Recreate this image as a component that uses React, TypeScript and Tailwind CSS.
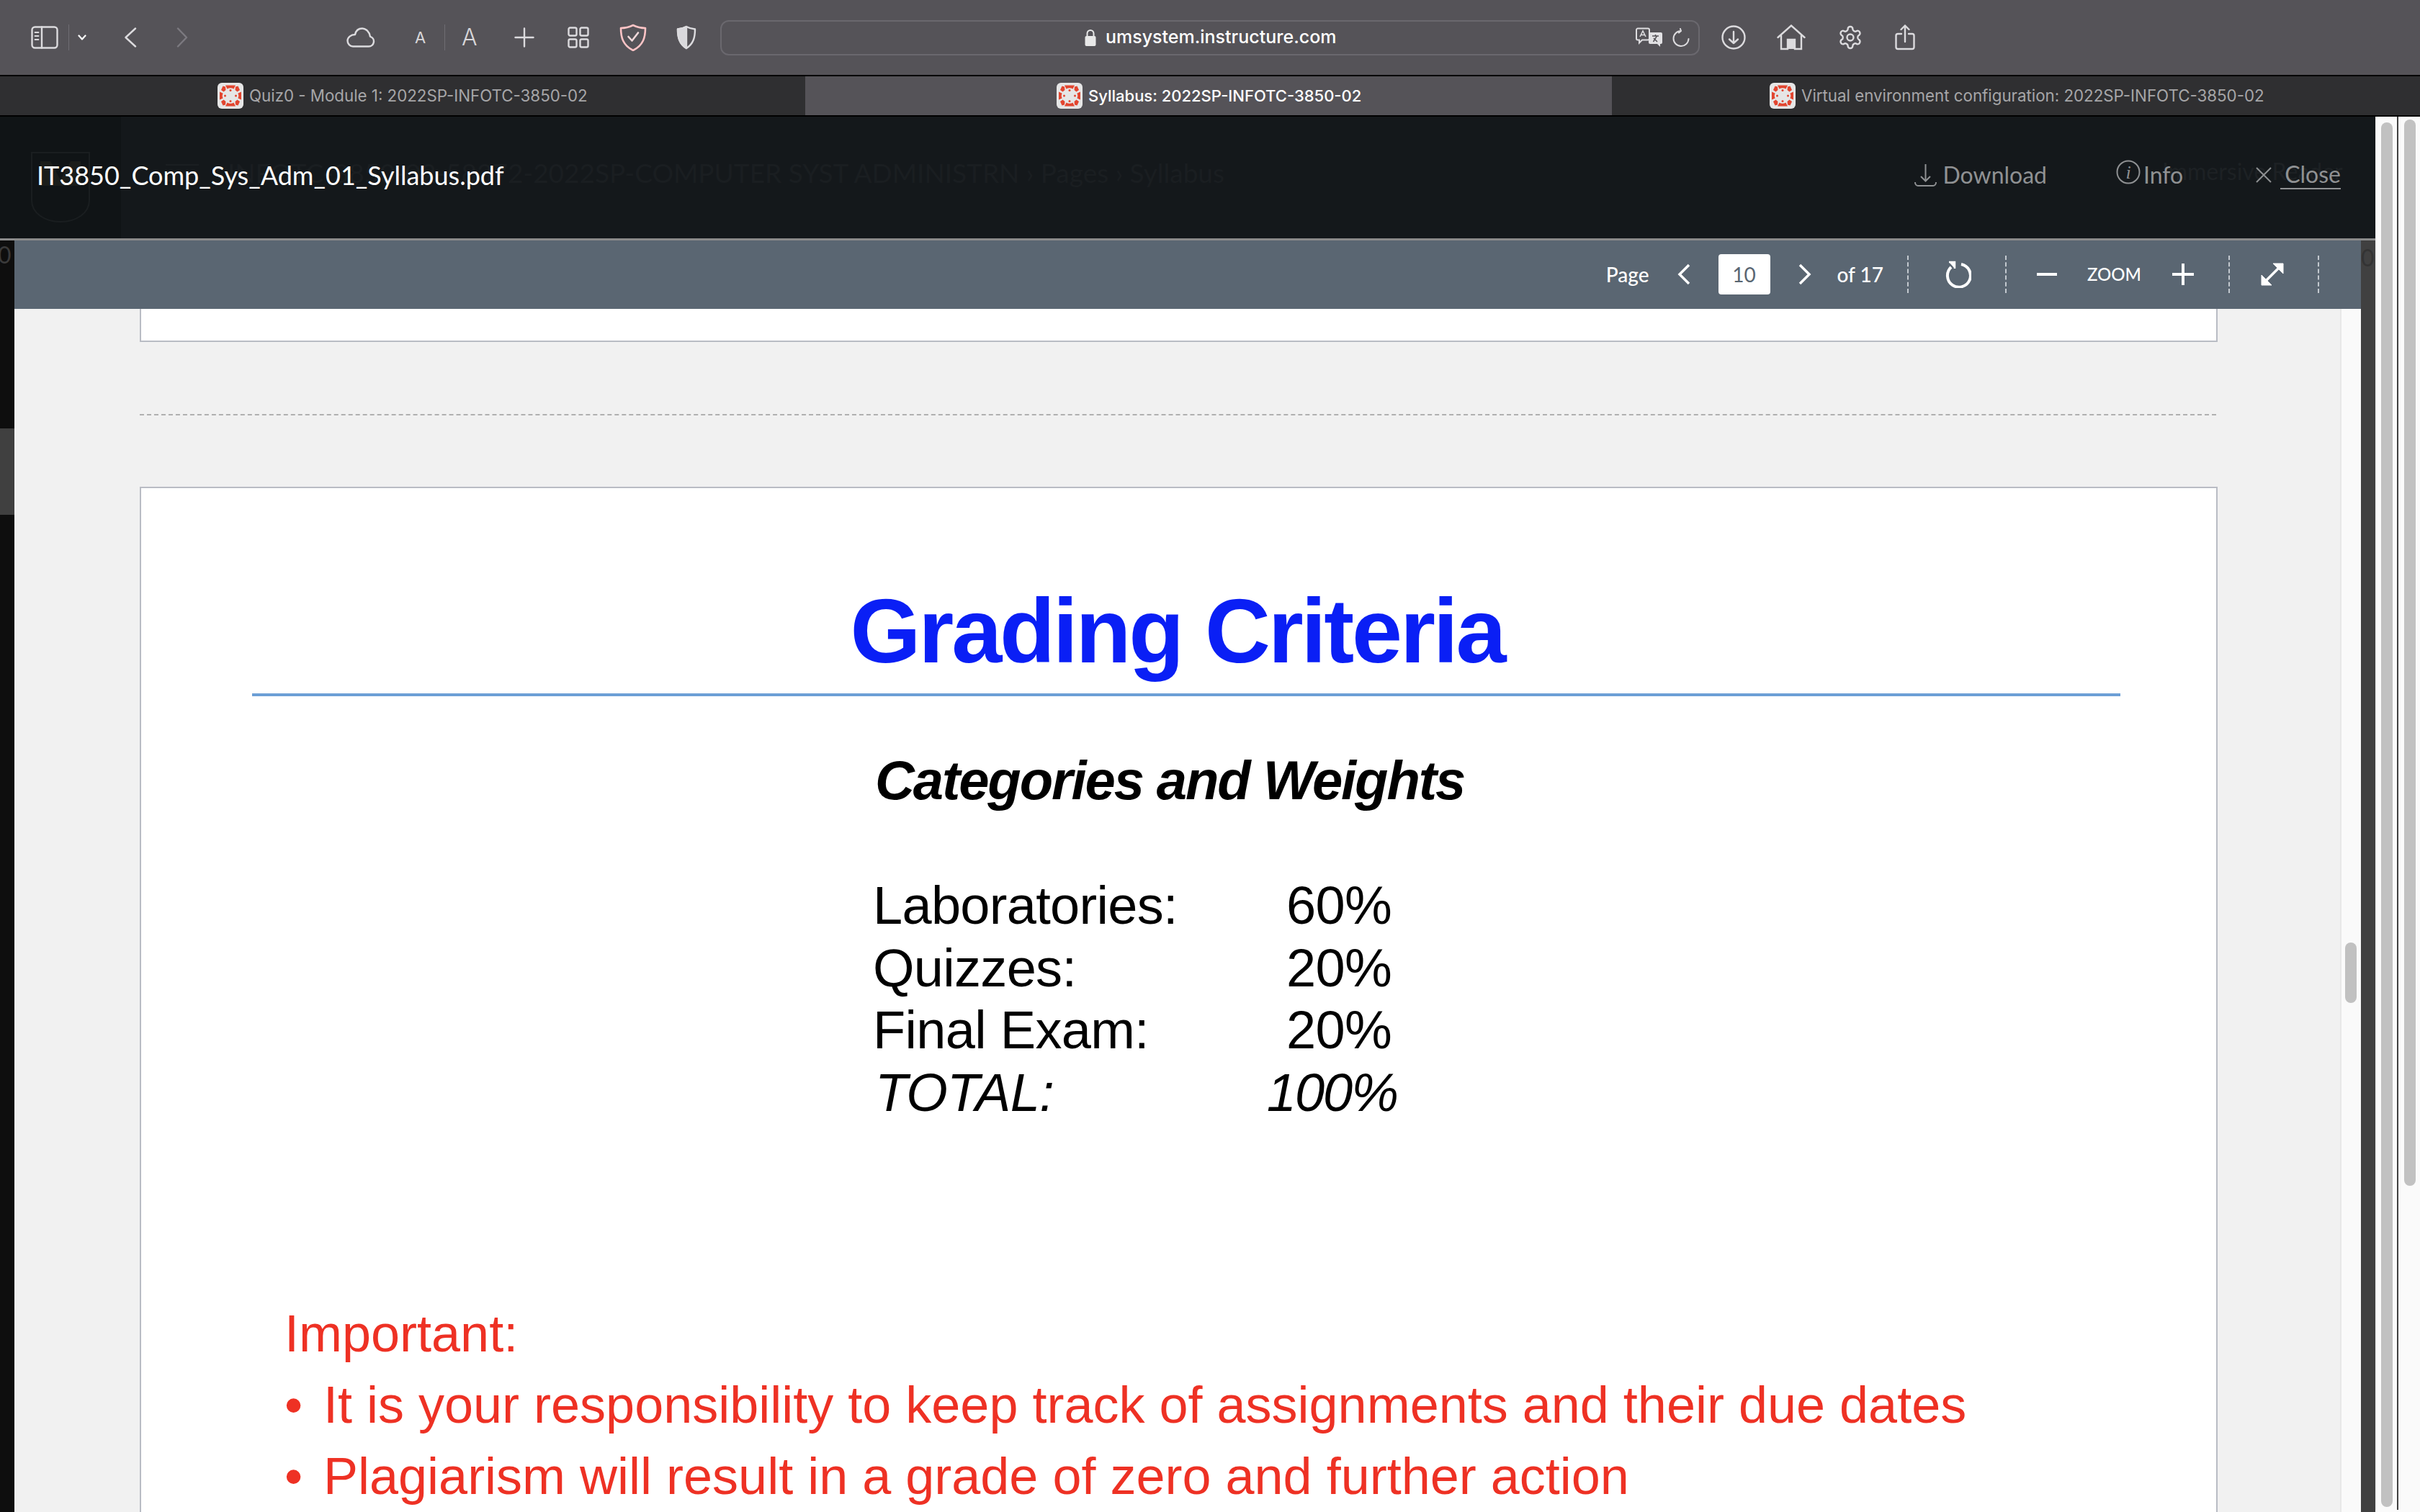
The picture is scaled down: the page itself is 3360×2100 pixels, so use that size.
import type { ReactNode } from "react";

const chrome = "font-['Inter','Liberation_Sans',sans-serif]";
const lato = "font-['Lato','Liberation_Sans',sans-serif]";
const helv = "font-['Liberation_Sans',Arial,sans-serif]";

// draws a small stroked icon, most of the toolbar uses the same settings
const Ico = ({ w, h, vb, ml, children, color = "#dcdbde", sw = 2.4 }: { w: number; h: number; vb: string; ml: string; children: ReactNode; color?: string; sw?: number }) => (
  <svg width={w} height={h} viewBox={vb} fill="none" stroke={color} strokeWidth={sw} strokeLinecap="round" strokeLinejoin="round" className={`shrink-0 ${ml}`}>
    {children}
  </svg>
);

const CanvasLogo = () => (
  <svg width="36" height="36" viewBox="0 0 36 36" className="shrink-0">
    <rect width="36" height="36" rx="6" fill="#e6e6e6" />
    <g fill="#e2452f">
      <path d="M11 3.500h14l-2.500 5a9 9 0 0 0-9 0z" />
      <path d="M11 32.500h14l-2.500-5a9 9 0 0 1-9 0z" />
      <path d="M3 12.500l4.500 2a8 8 0 0 0 0 7l-4.500 2z" />
      <path d="M33 12.500l-4.500 2a8 8 0 0 1 0 7l4.500 2z" />
      <path d="M7.500 4.500l3.500 1 .5 4.500-3 2.500-3.500-2.500z" />
      <path d="M28.500 4.500l-3.500 1-.5 4.500 3 2.500 3.500-2.500z" />
      <path d="M7.500 31.500l3.500-1 .5-4.500-3-2.500-3.500 2.500z" />
      <path d="M28.500 31.500l-3.500-1-.5-4.500 3-2.500 3.500 2.500z" />
      <circle cx="18" cy="10.500" r="1.500" />
      <circle cx="18" cy="25.500" r="1.500" />
      <circle cx="10.500" cy="18" r="1.500" />
      <circle cx="25.500" cy="18" r="1.500" />
    </g>
  </svg>
);

const Tab = ({ title, active, pl, w }: { title: string; active?: boolean; pl: string; w: string }) => (
  <div className={`flex items-center h-full ${w} ${pl} ${active ? "bg-[#555358] text-white font-medium" : "bg-[#2f2f31] text-[#a6a6a8]"}`}>
    <CanvasLogo />
    <span className={`${chrome} ml-2 whitespace-nowrap ${active ? "text-[22px]" : "text-[22.3px]"}`}>{title}</span>
  </div>
);

const Dash = ({ ml }: { ml: string }) => <div className={`h-[52px] border-l-2 border-dashed border-[#c3c9cf] ${ml}`} />;

const Toolbar = () => (
  <div className="flex items-center h-[104px] bg-[#555358] shrink-0">
    <Ico w={38} h={32} vb="0 0 38 32" ml="ml-[43px]">
      <rect x="1.500" y="1.500" width="35" height="29" rx="4" />
      <path d="M15 1.500v29" />
      <path d="M5.500 9h5M5.500 14h5M5.500 19h5" strokeWidth="1.800" />
    </Ico>
    <div className="w-px h-9 bg-[#6f6d73] ml-[14px]" />
    <Ico w={12} h={8} vb="0 0 12 8" ml="ml-[12px]" color="#ffffff" sw={2.200}>
      <path d="M1.500 1.500 6 6.500l4.500-5" />
    </Ico>
    <Ico w={18} h={28} vb="0 0 18 28" ml="ml-[52px]">
      <path d="M16 1.500 2.500 14 16 26.500" />
    </Ico>
    <Ico w={16} h={28} vb="0 0 16 28" ml="ml-[55px]" color="#7c7a80">
      <path d="M2 1.500 14 14 2 26.500" />
    </Ico>
    <Ico w={40} h={28} vb="0 0 40 28" ml="ml-[220px]">
      <path d="M9 26.500h22a7 7 0 0 0 2-13.700C32 6 27 1.500 22 1.500c-5.500 0-9 3.500-10 8.500-6 0-10.500 4-10.500 8.500S5 26.500 9 26.500z" />
    </Ico>
    <span className={`${chrome} ml-[55px] text-[#d8d7da] text-[22px] w-[15px] leading-none`}>A</span>
    <div className="w-px h-9 bg-[#6f6d73] ml-[26px]" />
    <span className={`${chrome} ml-[23px] text-[#d8d7da] text-[32px] w-[21px] font-light leading-none`}>A</span>
    <Ico w={28} h={28} vb="0 0 28 28" ml="ml-[52px]">
      <path d="M14 1.500v25M1.500 14h25" />
    </Ico>
    <Ico w={30} h={30} vb="0 0 30 30" ml="ml-[46px]">
      <rect x="1.500" y="1.500" width="11" height="11" rx="2" />
      <rect x="17.500" y="1.500" width="11" height="11" rx="2" />
      <rect x="1.500" y="17.500" width="11" height="11" rx="2" />
      <rect x="17.500" y="17.500" width="11" height="11" rx="2" />
    </Ico>
    <Ico w={38} h={38} vb="0 0 38 38" ml="ml-[42px]" color="#ffc4c6" sw={2.600}>
      <path d="M19 2c6 3 11 4 17 4 0 13-3 24-17 31C5 30 2 19 2 6c6 0 11-1 17-4z" />
      <path d="M12.500 18l5 5.500 8.500-11" stroke="#f1d8da" />
    </Ico>
    <Ico w={28} h={34} vb="0 0 28 34" ml="ml-[41px]">
      <path d="M14 2c3.500 2 7 3 12 3.500 0 11-2 20-12 26.500C4 25.500 2 16.500 2 5.500 7 5 10.500 4 14 2z" />
      <path d="M14 2v30C4 25.500 2 16.500 2 5.500 7 5 10.500 4 14 2z" fill="#d9d8dc" />
    </Ico>
    <div className="flex items-center ml-[33px] w-[1360px] h-[49px] border-2 border-[#6a686e] rounded-[12px] shrink-0">
      <svg width="16" height="24" viewBox="0 0 16 24" className="ml-[504px] shrink-0">
        <path d="M3.500 11V6.500a4.500 4.500 0 0 1 9 0V11" fill="none" stroke="#e8e8e8" strokeWidth="2" />
        <rect x="0.500" y="10" width="15" height="14" rx="2" fill="#e8e8e8" />
      </svg>
      <span className={`${chrome} ml-[13px] text-white text-[25px] font-medium whitespace-nowrap`}>umsystem.instructure.com</span>
      <svg width="38" height="28" viewBox="0 0 38 28" className="ml-[416px] shrink-0">
        <path d="M3 1.500h14a2 2 0 0 1 2 2v12a2 2 0 0 1-2 2H9l-4 4v-4H3a2 2 0 0 1-2-2v-12a2 2 0 0 1 2-2z" fill="none" stroke="#dedde0" strokeWidth="2" />
        <path d="M6 13 10 5l4 8M7.500 10.500h5" fill="none" stroke="#dedde0" strokeWidth="1.600" />
        <path d="M20 7h15a2 2 0 0 1 2 2v12a2 2 0 0 1-2 2h-1v4l-4-4H20a2 2 0 0 1-2-2V9a2 2 0 0 1 2-2z" fill="#e2e1e4" />
        <path d="M23 12h9M27.500 10v2M24.500 20l5-8M25 15l5 5" fill="none" stroke="#555358" strokeWidth="1.500" />
      </svg>
      <Ico w={24} h={26} vb="0 0 24 26" ml="ml-[13px]" sw={2}>
        <path d="M12 4a10.500 10.500 0 1 0 10.500 11M12 4l-1-3M12 4 9 6.500" />
      </Ico>
    </div>
    <Ico w={34} h={34} vb="0 0 34 34" ml="ml-[30px]">
      <circle cx="17" cy="17" r="15.500" />
      <path d="M17 9v16M11 19.500l6 5.500 6-5.500" />
    </Ico>
    <svg width="40" height="36" viewBox="0 0 40 36" className="ml-[43px] shrink-0">
      <path d="M1.500 18 20 1.500 38.500 18" fill="none" stroke="#dcdbde" strokeWidth="2.400" strokeLinecap="round" />
      <path d="M6 15v19h9V21h10v13h9V15" fill="none" stroke="#dcdbde" strokeWidth="2.400" />
      <rect x="15" y="21" width="10" height="13" fill="#dcdbde" />
    </svg>
    <svg width="36" height="36" viewBox="0 0 24 24" fill="none" stroke="#dcdbde" strokeWidth="1.600" strokeLinecap="round" strokeLinejoin="round" className="ml-[44px] shrink-0">
      <path d="M12.220 2h-.44a2 2 0 0 0-2 2v.18a2 2 0 0 1-1 1.730l-.43.250a2 2 0 0 1-2 0l-.15-.080a2 2 0 0 0-2.730.730l-.22.380a2 2 0 0 0 .730 2.730l.15.100a2 2 0 0 1 1 1.720v.510a2 2 0 0 1-1 1.740l-.15.090a2 2 0 0 0-.730 2.730l.22.380a2 2 0 0 0 2.730.730l.15-.080a2 2 0 0 1 2 0l.43.250a2 2 0 0 1 1 1.730V20a2 2 0 0 0 2 2h.44a2 2 0 0 0 2-2v-.18a2 2 0 0 1 1-1.730l.43-.250a2 2 0 0 1 2 0l.15.080a2 2 0 0 0 2.730-.730l.22-.390a2 2 0 0 0-.730-2.730l-.15-.080a2 2 0 0 1-1-1.740v-.500a2 2 0 0 1 1-1.740l.15-.090a2 2 0 0 0 .730-2.730l-.22-.380a2 2 0 0 0-2.730-.730l-.15.080a2 2 0 0 1-2 0l-.43-.250a2 2 0 0 1-1-1.730V4a2 2 0 0 0-2-2z" />
      <circle cx="12" cy="12" r="3" />
    </svg>
    <Ico w={28} h={36} vb="0 0 28 36" ml="ml-[44px]">
      <path d="M9 13H4a2.500 2.500 0 0 0-2.500 2.500v16A2.500 2.500 0 0 0 4 34h20a2.500 2.500 0 0 0 2.500-2.500v-16A2.500 2.500 0 0 0 24 13h-5" />
      <path d="M14 24V1.500M8.500 7 14 1.500 19.500 7" />
    </Ico>
  </div>
);

const DocHeader = () => (
  <div className="relative flex items-center h-[169px] pb-[8px] bg-[#14181b] shrink-0">
    {/* page behind the modal, barely visible through the overlay */}
    <div className="absolute left-0 top-0 h-full w-[168px] bg-[#101416]">
      <svg width="84" height="100" viewBox="0 0 84 100" className="ml-[42px] mt-[48px]" fill="none" stroke="#1a1e20" strokeWidth="2">
        <path d="M2 2h80v66c0 18-18 30-40 30S2 86 2 68z" />
        <path d="M14 14h14l14 26 14-26h14v34H14z" fill="#1b1d1a" stroke="none" />
      </svg>
    </div>
    <div className={`${lato} absolute left-[230px] top-[50px] flex items-center text-[37px] text-[#1a1e21] whitespace-nowrap`}>
      <div className="w-[46px] h-[24px] border-y-2 border-[#1a1e21] mr-[40px]" />
      <span>INFOTC-3850-02-58372-2022SP-COMPUTER SYST ADMINISTRN › Pages › Syllabus</span>
    </div>
    <span className={`${lato} absolute left-[3002px] top-[52px] text-[32px] text-[#1d2124] whitespace-nowrap`}>Immersive Reader</span>

    <span className={`${lato} relative ml-[51px] text-white text-[36px] whitespace-nowrap`}>IT3850_Comp_Sys_Adm_01_Syllabus.pdf</span>
    <div className={`${lato} relative ml-auto flex items-center text-[32px] text-[#8f9193] pr-[48px]`}>
      <svg width="31" height="32" viewBox="0 0 31 32" fill="none" stroke="#8f9193" strokeWidth="2" className="shrink-0">
        <path d="M15.500 1v23M9 18l6.500 6.500L22 18M1 26c0 3 2 5 4 5h21c2 0 4-2 4-5" />
      </svg>
      <span className="ml-2">Download</span>
      <svg width="34" height="34" viewBox="0 0 34 34" className="ml-[96px] shrink-0 -mt-2">
        <circle cx="17" cy="17" r="15.500" fill="none" stroke="#8f9193" strokeWidth="2" />
        <text x="17" y="26" textAnchor="middle" fontFamily="Liberation Serif" fontStyle="italic" fontSize="26" fill="#8f9193">i</text>
      </svg>
      <span className="ml-1">Info</span>
      <svg width="22" height="22" viewBox="0 0 22 22" stroke="#8f9193" strokeWidth="2" className="ml-[101px] shrink-0">
        <path d="M1 1l20 20M21 1 1 21" />
      </svg>
      <span className="ml-[12px] pl-[6px] leading-[38px] border-b-2 border-[#8f9193]">Close</span>
    </div>
  </div>
);

const PdfBar = () => (
  <div className={`${lato} flex items-center justify-end h-[95px] pb-[2px] bg-[#5a6672] text-white shrink-0`}>
    <span className="text-[28px] font-medium">Page</span>
    <svg width="20" height="30" viewBox="0 0 20 30" fill="none" stroke="#fff" strokeWidth="3.500" className="ml-[38px]">
      <path d="M17 2 4 15l13 13" />
    </svg>
    <div className="flex items-center justify-center w-[72px] h-[56px] ml-[38px] bg-white rounded-[4px] text-[#5a6672] text-[28px]">10</div>
    <svg width="20" height="30" viewBox="0 0 20 30" fill="none" stroke="#fff" strokeWidth="3.500" className="ml-[38px]">
      <path d="M3 2l13 13L3 28" />
    </svg>
    <span className="ml-[35px] text-[28px] font-medium">of 17</span>
    <Dash ml="ml-[33px]" />
    <svg width="38" height="38" viewBox="0 0 38 38" fill="none" stroke="#fff" strokeWidth="4" className="ml-[49px]">
      <path d="M24 5a16 16 0 1 1-14 4" />
      <path d="M7 2h8v9" fill="#fff" strokeWidth="2.500" />
    </svg>
    <Dash ml="ml-[47px]" />
    <svg width="28" height="6" viewBox="0 0 28 6" className="ml-[42px]"><rect width="28" height="4" y="1" fill="#fff" /></svg>
    <span className="ml-[42px] text-[24px] font-medium">ZOOM</span>
    <svg width="30" height="30" viewBox="0 0 30 30" stroke="#fff" strokeWidth="4" className="ml-[43px]"><path d="M15 0v30M0 15h30" /></svg>
    <Dash ml="ml-[48px]" />
    <svg width="36" height="36" viewBox="0 0 36 36" fill="none" stroke="#fff" strokeWidth="3.500" className="ml-[41px]">
      <path d="M5 31 31 5" />
      <path d="M19 3h14v14L19 3zM3 19v14h14L3 19z" fill="#fff" strokeWidth="1" />
    </svg>
    <Dash ml="ml-[45px]" />
    <div className="w-[58px]" />
  </div>
);

const grades = [
  ["Laboratories:", "60%"],
  ["Quizzes:", "20%"],
  ["Final Exam:", "20%"],
];

const PdfPage = () => (
  <div className={`${helv} border-2 border-b-0 border-[#b9bcc4] bg-white w-[2885px] ml-[174px] mt-[99px] h-[1430px] shrink-0`}>
    <h1 className="text-center text-[126px] leading-[126px] font-bold tracking-[-3.200px] text-[#0a1ff5] mt-[136px] pr-[4px]">Grading Criteria</h1>
    <div className="h-1 bg-[#6c9fd6] ml-[154px] mr-[133px] mt-[23px]" />
    <h2 className="ml-[1019px] mt-[73px] text-[76px] leading-[88px] font-bold italic tracking-[-2.100px] text-black">Categories and Weights</h2>
    <div className="ml-[1016px] mt-[87px] w-[720px] text-[74px] leading-[86.500px] tracking-[-0.700px] text-black">
      {grades.map(([label, pct]) => (
        <div key={label} className="flex justify-between">
          <span>{label}</span>
          <span>{pct}</span>
        </div>
      ))}
      <div className="flex justify-between italic">
        <span className="pl-[3px]">TOTAL:</span>
        <span className="-mr-[8px] tracking-[-2px]">100%</span>
      </div>
    </div>
    <div className="ml-[199px] mt-[242px] text-[72px] leading-[99px] text-[#ee3124]">
      <p>Important:</p>
      <p className="flex"><span className="w-[54px]">•</span><span>It is your responsibility to keep track of assignments and their due dates</span></p>
      <p className="flex"><span className="w-[54px]">•</span><span>Plagiarism will result in a grade of zero and further action</span></p>
    </div>
  </div>
);

export default function App() {
  return (
    <div className="flex flex-col w-[3360px] h-[2100px] overflow-hidden bg-[#fafafa]">
      <Toolbar />
      <div className="h-[2px] bg-black shrink-0" />
      <div className="flex h-[54px] shrink-0">
        <Tab title="Quiz0 - Module 1: 2022SP-INFOTC-3850-02" pl="pl-[302px]" w="w-[1118px]" />
        <Tab title="Syllabus: 2022SP-INFOTC-3850-02" active pl="pl-[349px]" w="w-[1120px]" />
        <Tab title="Virtual environment configuration: 2022SP-INFOTC-3850-02" pl="pl-[219px]" w="flex-1" />
      </div>
      <div className="h-[2px] bg-black shrink-0" />
      <div className="flex flex-1 min-h-0">
        <div className="flex flex-col w-[3298px] shrink-0">
          <DocHeader />
          <div className="h-[3px] bg-[#8a8a8a] shrink-0" />
          <div className="flex flex-1 min-h-0">
            <div className={`${lato} flex flex-col w-[20px] bg-[#0e0e0e] shrink-0 text-[#3a3a3a] text-[32px] overflow-hidden`}>
              <span className="-ml-[3px] leading-[40px]">0</span>
              <div className="mt-[221px] h-[120px] bg-[#404040]" />
            </div>
            <div className="flex flex-col w-[3258px] shrink-0">
              <PdfBar />
              <div className="flex flex-1 min-h-0">
                <div className="flex flex-col w-[3229px] bg-[#f1f1f1] overflow-hidden shrink-0">
                  <div className="h-[46px] ml-[174px] w-[2885px] bg-white border-x-2 border-b-2 border-[#b9bcc4] shrink-0" />
                  <div className="border-t-2 border-dashed border-[#b0b0b0] ml-[174px] w-[2883px] mt-[100px] shrink-0" />
                  <PdfPage />
                </div>
                <div className="flex-1 bg-[#fafafa] border-l-2 border-[#e8e8e8] pl-[5px]">
                  <div className="w-4 h-[84px] mt-[880px] bg-[#c1c1c1] rounded-full" />
                </div>
              </div>
            </div>
            <div className={`${lato} w-[20px] bg-[#404040] shrink-0 text-[#333333] text-[32px] overflow-hidden`}>
              <span className="leading-[40px]">0</span>
            </div>
          </div>
        </div>
        <div className="flex flex-1">
          <div className="w-[30px] bg-[#fafafa] border-l-2 border-[#eeeeee] pl-[6px] pt-[8px] h-[1935px]">
            <div className="w-4 h-[1923px] bg-[#c1c1c1] rounded-full" />
          </div>
          <div className="w-[2px] bg-[#404040] h-[1935px]" />
          <div className="flex-1 bg-[#fafafa] pl-[8px] pt-[4px]">
            <div className="w-4 h-[1481px] bg-[#c1c1c1] rounded-full" />
          </div>
        </div>
      </div>
    </div>
  );
}
